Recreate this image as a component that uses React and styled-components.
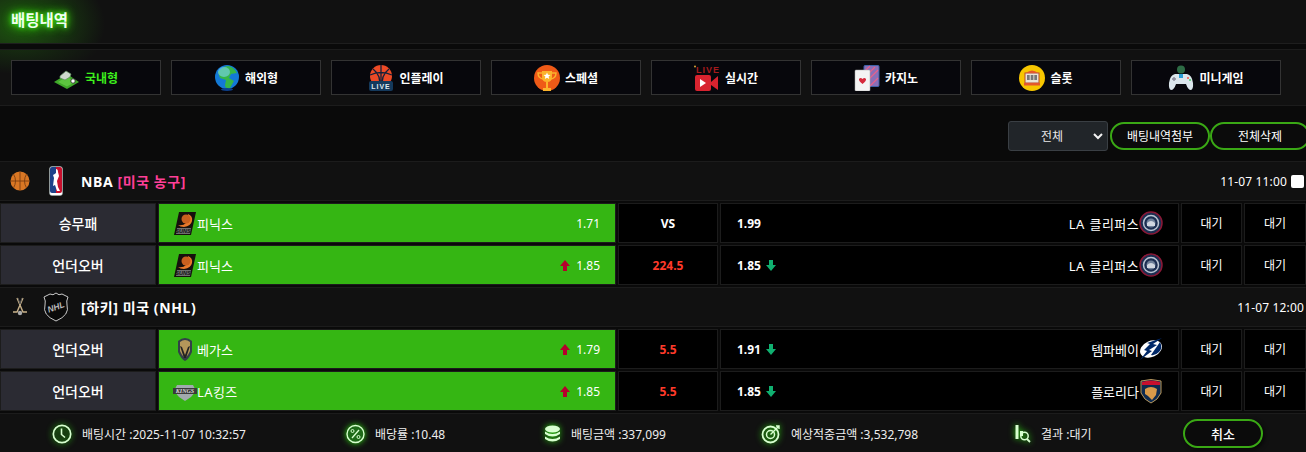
import styled, { createGlobalStyle } from "styled-components";

const GlobalStyle = createGlobalStyle`
  html, body { margin: 0; padding: 0; background: #0a0a0a; }
  body { font-family: "Noto Sans", "Noto Sans CJK KR", sans-serif; color: #fff; overflow: hidden; }
  * { box-sizing: border-box; }
`;

const Page = styled.div`
  width: 1306px;
  height: 452px;
  overflow: hidden;
  background: #0a0a0a;
`;

const TitleBar = styled.div`
  height: 44px;
  display: flex;
  align-items: center;
  padding: 0 0 4px 11px;
  background: radial-gradient(ellipse 85px 60px at 20px 24px, rgba(44, 160, 14, 0.5), rgba(44, 160, 14, 0) 100%), #111;
  border-bottom: 1px solid #1e1e1e;
`;

const Title = styled.h1`
  margin: 0;
  font-size: 15.5px;
  font-weight: 700;
  color: #f0fff0;
  text-shadow: 0 0 4px #3fe010, 0 0 8px #3fe010, 0 0 12px #2cb80c;
`;

const NavBar = styled.div`
  margin-top: 5px;
  height: 57px;
  display: flex;
  gap: 10px;
  padding: 10px 0 0 11px;
  background: radial-gradient(ellipse 80px 30px at 20px -6px, rgba(44, 160, 14, 0.22), rgba(44, 160, 14, 0) 100%), #111;
  border-top: 1px solid #1c1c1c;
  border-bottom: 1px solid #1c1c1c;
`;

const NavButton = styled.div`
  width: 150px;
  height: 35px;
  display: flex;
  align-items: center;
  justify-content: center;
  gap: 5px;
  background: #07070c;
  border: 1px solid #333;
  font-size: 12px;
  font-weight: 700;
  color: ${(p) => (p.$active ? "#3df01c" : "#fff")};
`;

const Toolbar = styled.div`
  height: 55px;
  display: flex;
  align-items: center;
  justify-content: flex-end;
  padding: 5px 0 0 0;
  margin-right: -4px;
`;

const SelectBox = styled.div`
  width: 100px;
  height: 30px;
  margin-right: 2px;
  display: flex;
  align-items: center;
  padding: 0 4px 0 32px;
  justify-content: space-between;
  background: #212529;
  border: 1px solid #3a3f44;
  border-radius: 3px;
  font-size: 12px;
  color: #e8e8e8;
`;

const PillButton = styled.div`
  width: ${(p) => p.$w || 100}px;
  height: 28px;
  display: flex;
  align-items: center;
  justify-content: center;
  background: #0b0b0b;
  border: 2px solid #3aa815;
  border-radius: 14px;
  font-size: 12px;
  color: #fff;
`;

const GroupHeader = styled.div`
  height: 40px;
  margin-bottom: 2px;
  display: flex;
  align-items: center;
  background: #111;
  border-top: 1px solid #1c1c1c;
  border-bottom: 1px solid #1c1c1c;
  padding-right: 2px;
`;

const SportSlot = styled.div`
  width: 40px;
  display: flex;
  justify-content: center;
`;

const LeagueSlot = styled.div`
  width: 32px;
  display: flex;
  justify-content: center;
`;

const LeagueName = styled.div`
  margin-left: 9px;
  font-size: 14px;
  font-weight: 700;
  letter-spacing: 0.6px;
  flex: 1;
  color: #fff;
`;

const Accent = styled.span`
  color: #ff3f97;
`;

const KickOff = styled.div`
  font-size: 12px;
  letter-spacing: 0.15px;
  color: #fff;
`;

const CheckBox = styled.div`
  width: 13px;
  height: 13px;
  margin-left: 4px;
  background: #fff;
  border-radius: 2px;
`;

const Row = styled.div`
  height: 40px;
  margin-bottom: 2px;
  display: grid;
  grid-template-columns: 156px 458px 100px 459px 61px 62px;
  column-gap: 2px;
`;

const Cell = styled.div`
  display: flex;
  align-items: center;
  background: #000;
  border: 1px solid #1c1c1c;
  font-size: 12px;
  color: #fff;
`;

const LabelCell = styled(Cell)`
  justify-content: center;
  background: #2b2b33;
  font-size: 14px;
  font-weight: 500;
`;

const HomeCell = styled(Cell)`
  background: #35b613;
  padding: 0 15px 0 14px;
  font-size: 13px;
`;

const AwayCell = styled(Cell)`
  padding: 0 15px 0 16px;
  font-size: 13px;
`;

const CenterCell = styled(Cell)`
  justify-content: center;
  font-weight: 700;
  color: ${(p) => (p.$red ? "#ff3a2a" : "#fff")};
`;

const StatusCell = styled(Cell)`
  justify-content: center;
`;

const TeamName = styled.span`
  flex: 1;
  letter-spacing: ${(p) => (p.$wide ? "0.4px" : "0")};
  word-spacing: ${(p) => (p.$wide ? "1px" : "0")};
`;

const AwayName = styled(TeamName)`
  flex: 0 0 auto;
  margin-left: auto;
`;

const Odds = styled.span`
  font-size: 12px;
  font-weight: ${(p) => (p.$bold ? 700 : 400)};
`;

const ArrowWrap = styled.span`
  display: inline-flex;
  margin: ${(p) => (p.$left ? "0 6px 0 0" : "0 0 0 5px")};
`;

const Footer = styled.div`
  height: 40px;
  display: grid;
  grid-template-columns: 294px 198px 217px 254px 168px 80px;
  align-items: center;
  padding-left: 52px;
  background: #111;
  border-top: 1px solid #1c1c1c;
`;

const FooterItem = styled.div`
  display: flex;
  align-items: center;
  gap: 10px;
  font-size: 12px;
  color: #eee;
`;

const CancelButton = styled(PillButton)`
  height: 29px;
  border-radius: 15px;
  font-size: 13px;
  font-weight: 500;
  box-shadow: 2px 2px 4px rgba(0, 0, 0, 0.6);
`;

const Glow = styled.svg`
  filter: drop-shadow(0 0 3px #2ee00f);
  flex: none;
`;

const FieldIcon = () => (
  <svg width="26" height="26" viewBox="0 0 26 26">
    <path d="M0 17 13 9l12 8-12 7z" fill="#3fa82a" />
    <path d="M4 17 13 11.500l8 5.500-8 4.500z" fill="#5cc63f" />
    <path d="M6 11l6-5 5 3-1 3-5 3-5-2z" fill="#cfd8cf" stroke="#5a8a5a" strokeWidth="0.7" />
    <circle cx="19" cy="16" r="2.200" fill="#fff" stroke="#222" strokeWidth="0.800" />
  </svg>
);

const GlobeIcon = () => (
  <svg width="26" height="26" viewBox="0 0 26 26">
    <circle cx="13" cy="12" r="12" fill="#1379d6" />
    <path d="M4 7q5-6 10-6 6 1 9 7l-6 1-2 4 5 3-4 7q-5 1-5-3l1-5-6-2z" fill="#35b648" />
    <ellipse cx="10" cy="7" rx="6" ry="5" fill="#7fd4f4" opacity="0.6" />
    <ellipse cx="13" cy="24.500" rx="6" ry="1.400" fill="#0c3f8c" />
  </svg>
);

const LiveBallIcon = () => (
  <svg width="26" height="26" viewBox="0 0 26 26">
    <circle cx="13" cy="11" r="11" fill="#ed4a26" />
    <path d="M2 10q11-5 22 0M13 0v22M5 4q9 7 6 18M21 4q-9 7-6 18" fill="none" stroke="#12203a" strokeWidth="1.300" />
    <rect x="1" y="16" width="24" height="10" rx="2" fill="#14395c" />
    <text x="13" y="24" textAnchor="middle" fontSize="7" fontWeight="700" letterSpacing="1" fill="#dfe8f0" fontFamily="Liberation Sans, sans-serif">LIVE</text>
  </svg>
);

const TrophyIcon = () => (
  <svg width="26" height="26" viewBox="0 0 26 26">
    <circle cx="13" cy="13" r="13" fill="#ef5a17" />
    <path d="M8 6h10v6q0 5-5 5t-5-5z" fill="#fbb32c" />
    <path d="M8 8H4q0 5 5 6M18 8h4q0 5-5 6" fill="none" stroke="#fbb32c" strokeWidth="1.400" />
    <path d="M12 17h2v6h3v3H9v-3h3z" fill="#fbb32c" />
    <path d="m13 7.500 1 2.300 2.500.2-1.900 1.600.6 2.400-2.200-1.300-2.200 1.300.6-2.400-1.900-1.600 2.500-.2z" fill="#fff" />
  </svg>
);

const LiveCamIcon = () => (
  <svg width="26" height="26" viewBox="0 0 26 26">
    <text x="2" y="8" fontSize="9" fontWeight="700" letterSpacing="1" fill="#a51a1c" fontFamily="Liberation Sans, sans-serif">LIVE</text>
    <circle cx="1" cy="1.500" r="1" fill="#d9a23a" />
    <rect x="1" y="10" width="16" height="16" rx="2" fill="#d8232f" />
    <path d="m17 17 7-6v14l-7-5z" fill="#d8232f" />
    <path d="m6 14 6 4-6 4z" fill="#fff" />
  </svg>
);

const CardsIcon = () => (
  <svg width="26" height="26" viewBox="0 0 26 26">
    <rect x="10" y="0.500" width="15" height="21" rx="1" fill="#8a6fb8" stroke="#3d62a8" />
    <path d="m11 6 5-5M11 12 21 2M11 18 24 5M16 21l8-8" stroke="#e8608a" strokeWidth="1.200" />
    <rect x="1" y="5" width="15" height="21" rx="1" fill="#f4f4f4" stroke="#aaa" strokeWidth="0.500" />
    <path d="M8.500 19q-4-3-3.500-5 1.500-2 3.500 0 2-2 3.500 0 .5 2-3.500 5z" fill="#d62a3c" />
  </svg>
);

const SlotIcon = () => (
  <svg width="26" height="26" viewBox="0 0 26 26">
    <circle cx="13" cy="13" r="13" fill="#f7c600" />
    <rect x="6" y="8" width="14" height="10" fill="#e9e4d8" stroke="#b9482c" />
    <path d="M7 8q6-5 12 0z" fill="#e4582c" />
    <rect x="8" y="10" width="2.700" height="5" fill="#777" />
    <rect x="11.700" y="10" width="2.700" height="5" fill="#777" />
    <rect x="15.300" y="10" width="2.700" height="5" fill="#777" />
    <rect x="5" y="18" width="16" height="2.500" fill="#e4582c" />
  </svg>
);

const PadIcon = () => (
  <svg width="26" height="26" viewBox="0 0 26 26">
    <circle cx="13" cy="4.500" r="4" fill="#2d6b45" />
    <path d="M7 9h12q5 1 6 9 .5 6-2 7-3 0-5-6H8q-2 6-5 6-2.500-1-2-7 1-8 6-9z" fill="#dbe6ec" />
    <rect x="11" y="9" width="4" height="4" fill="#2a9fd6" />
    <circle cx="20" cy="13" r="1" fill="#e54" />
    <circle cx="22" cy="15" r="1" fill="#4c6" />
    <path d="M6 12v4M4 14h4" stroke="#889" strokeWidth="1.400" />
  </svg>
);

const BasketballIcon = () => (
  <svg width="20" height="20" viewBox="0 0 20 20">
    <circle cx="10" cy="10" r="9.500" fill="#d97724" />
    <path d="M.5 10h19M10 .5v19M3.500 3q4 7 0 14M16.500 3q-4 7 0 14" fill="none" stroke="#7a3d10" strokeWidth="0.900" />
  </svg>
);

const NbaLogo = () => (
  <svg width="14" height="30" viewBox="0 0 14 30">
    <rect x="0.500" y="0.500" width="13" height="29" rx="2.500" fill="#fff" stroke="#9aa" strokeWidth="0.500" />
    <path d="M1 3q0-2 2-2h4v26H3q-2 0-2-2z" fill="#1d428a" />
    <path d="M7 1h4q2 0 2 2v22q0 2-2 2H7z" fill="#c8102e" />
    <path d="M7 3q2 0 2 3l1 4-2 5 1 6 2 4H8l-2-6-2 1 1-8-1-3q2-1 3-2z" fill="#fff" />
  </svg>
);

const SticksIcon = () => (
  <svg width="16" height="20" viewBox="0 0 16 20">
    <path d="M11 1 5 15H1M5 1l6 14h4" fill="none" stroke="#c9b28a" strokeWidth="1.400" />
    <path d="M8 7 6 1M8 7l2-6" stroke="#555" strokeWidth="1" />
    <circle cx="8" cy="16" r="2.200" fill="#aaa" />
  </svg>
);

const NhlLogo = () => (
  <svg width="26" height="30" viewBox="0 0 26 30">
    <path d="M13 1q3 3 6 1l6 3q-2 4-1 8 3 10-11 16Q-1 23 2 13q1-4-1-8l6-3q3 2 6-1z" fill="#0a0a0a" stroke="#c9c9c9" strokeWidth="1" />
    <text x="13" y="18" textAnchor="middle" fontSize="8.500" fontWeight="700" fontStyle="italic" fill="#bbb" fontFamily="Liberation Sans, sans-serif" transform="rotate(-20 13 15)">NHL</text>
  </svg>
);

const SunsLogo = () => (
  <svg width="24" height="25" viewBox="0 0 24 25">
    <path d="M6 1h17l-5 23H1z" fill="#16100d" />
    <path d="M15 3q5 2 4 7t-8 6q-4 0-6-2 5 1 8-2t2-9z" fill="#e8792b" />
    <circle cx="13" cy="8" r="4.500" fill="#c9601f" />
    <path d="M4 17h14l-1 6H3z" fill="#6e6e6e" />
    <text x="10" y="22" textAnchor="middle" fontSize="5.500" fontWeight="700" fontStyle="italic" fill="#111" fontFamily="Liberation Sans, sans-serif">SUNS</text>
  </svg>
);

const ClippersLogo = () => (
  <svg width="24" height="24" viewBox="0 0 24 24">
    <circle cx="12" cy="12" r="11" fill="#1c2f52" stroke="#8a1836" strokeWidth="1.500" />
    <circle cx="12" cy="12" r="7.500" fill="none" stroke="#b9c4d2" strokeWidth="1.500" />
    <circle cx="12" cy="12" r="4.500" fill="#6d7f98" />
    <path d="M8 12q4-4 8 0v3H8z" fill="#cfd6e0" />
  </svg>
);

const VegasLogo = () => (
  <svg width="24" height="25" viewBox="0 0 24 25">
    <path d="M5 4q7-6 14 0v11q-3 7-7 9-4-2-7-9z" fill="#333f48" />
    <path d="M7 5q5-4 10 0v9q-2 5-5 7-3-2-5-7z" fill="#b4975a" />
    <path d="m9 10 3 8 3-8 2-1-4 12h-2L7 9z" fill="#222" />
  </svg>
);

const KingsLogo = () => (
  <svg width="24" height="25" viewBox="0 0 24 25">
    <path d="M4 6h16l3 6-5 6-6 4-6-4-5-6z" fill="#a2aaad" />
    <rect x="0" y="9" width="24" height="6" fill="#3a3a3a" />
    <text x="12" y="14" textAnchor="middle" fontSize="6" fontWeight="700" fontStyle="italic" fill="#ddd" fontFamily="Liberation Serif, serif">KINGS</text>
  </svg>
);

const LightningLogo = () => (
  <svg width="24" height="24" viewBox="0 0 24 24">
    <ellipse cx="12" cy="12" rx="11.500" ry="8" fill="#fff" transform="rotate(-25 12 12)" />
    <path d="M23 1 14 7l4 1-8 5 3 1L1 23l7-9-3-1 6-6-3-1z" fill="#002868" />
    <path d="M21 5q3 6-1 10t-8 3z" fill="#002868" />
  </svg>
);

const PanthersLogo = () => (
  <svg width="24" height="25" viewBox="0 0 24 25">
    <path d="M2 2q10-3 20 0v12q-3 7-10 10Q5 21 2 14z" fill="#0d2a4f" stroke="#b9975b" strokeWidth="1" />
    <path d="M3 3q9-3 18 0v3H3z" fill="#c8102e" />
    <path d="M6 10q6-4 12 0l-1 6-4 5-4-4-3-2z" fill="#d89a4a" />
  </svg>
);

const UpArrow = () => (
  <svg width="10" height="11" viewBox="0 0 10 11">
    <path d="M5 0 10 6H7v5H3V6H0z" fill="#b5002c" />
  </svg>
);

const DownArrow = () => (
  <svg width="10" height="11" viewBox="0 0 10 11">
    <path d="M5 11 10 5H7V0H3v5H0z" fill="#10b070" />
  </svg>
);

const Chevron = () => (
  <svg width="10" height="7" viewBox="0 0 10 7">
    <path d="M1 1l4 4 4-4" fill="none" stroke="#f2f2f2" strokeWidth="2" />
  </svg>
);

const GLOW = "#d8ffd0";

const ClockIcon = () => (
  <Glow width="20" height="20" viewBox="0 0 20 20">
    <circle cx="10" cy="10" r="8.700" fill="none" stroke={GLOW} strokeWidth="1.700" />
    <path d="M9.500 4.500V10.500l3.500 3" fill="none" stroke={GLOW} strokeWidth="1.600" />
  </Glow>
);

const PercentIcon = () => (
  <Glow width="19" height="20" viewBox="0 0 19 20">
    <circle cx="9.500" cy="10" r="8.500" fill="#1e6a18" stroke={GLOW} strokeWidth="1.400" />
    <path d="m6 14 7-8" stroke={GLOW} strokeWidth="1.300" />
    <circle cx="6.500" cy="7" r="1.500" fill="none" stroke={GLOW} />
    <circle cx="12.500" cy="13" r="1.500" fill="none" stroke={GLOW} />
  </Glow>
);

const CoinsIcon = () => (
  <Glow width="17" height="18" viewBox="0 0 17 18">
    <ellipse cx="8.500" cy="4" rx="7.500" ry="3.500" fill={GLOW} />
    <path d="M1 6.500q7.500 5 15 0V9q-7.500 5-15 0zM1 11.500q7.500 5 15 0V14q-7.500 5-15 0z" fill={GLOW} />
  </Glow>
);

const TargetIcon = () => (
  <Glow width="20" height="20" viewBox="0 0 20 20">
    <circle cx="9.500" cy="10.500" r="8" fill="none" stroke={GLOW} strokeWidth="1.800" />
    <circle cx="9.500" cy="10.500" r="4" fill="none" stroke={GLOW} strokeWidth="1.500" />
    <path d="m9.500 10.500 8-8M15 2h3v3" fill="none" stroke={GLOW} strokeWidth="1.400" />
  </Glow>
);

const ResultIcon = () => (
  <Glow width="16" height="20" viewBox="0 0 16 20">
    <rect x="0.500" y="1" width="3" height="14" fill={GLOW} />
    <rect x="5" y="7" width="3" height="5" fill={GLOW} />
    <circle cx="9.500" cy="12" r="3.700" fill="none" stroke={GLOW} strokeWidth="1.500" />
    <path d="m12 15 3 3" stroke={GLOW} strokeWidth="1.800" />
  </Glow>
);

const navItems = [
  { label: "국내형", Icon: FieldIcon, active: true },
  { label: "해외형", Icon: GlobeIcon },
  { label: "인플레이", Icon: LiveBallIcon },
  { label: "스페셜", Icon: TrophyIcon },
  { label: "실시간", Icon: LiveCamIcon },
  { label: "카지노", Icon: CardsIcon },
  { label: "슬롯", Icon: SlotIcon },
  { label: "미니게임", Icon: PadIcon },
];

const BetRow = ({ market, HomeLogo, home, homeOdds, up, middle, red, awayOdds, down, away, AwayLogo, wideHome, wideAway }) => (
  <Row>
    <LabelCell>{market}</LabelCell>
    <HomeCell>
      <HomeLogo />
      <TeamName $wide={wideHome}>{home}</TeamName>
      {up && (
        <ArrowWrap $left>
          <UpArrow />
        </ArrowWrap>
      )}
      <Odds>{homeOdds}</Odds>
    </HomeCell>
    <CenterCell $red={red}>{middle}</CenterCell>
    <AwayCell>
      <Odds $bold>{awayOdds}</Odds>
      {down && (
        <ArrowWrap>
          <DownArrow />
        </ArrowWrap>
      )}
      <AwayName $wide={wideAway}>{away}</AwayName>
      <AwayLogo />
    </AwayCell>
    <StatusCell>대기</StatusCell>
    <StatusCell>대기</StatusCell>
  </Row>
);

export default function App() {
  return (
    <Page>
      <GlobalStyle />
      <TitleBar>
        <Title>배팅내역</Title>
      </TitleBar>
      <NavBar>
        {navItems.map(({ label, Icon, active }) => (
          <NavButton key={label} $active={active}>
            <Icon />
            {label}
          </NavButton>
        ))}
      </NavBar>
      <Toolbar>
        <SelectBox>
          전체
          <Chevron />
        </SelectBox>
        <PillButton>배팅내역첨부</PillButton>
        <PillButton>전체삭제</PillButton>
      </Toolbar>

      <GroupHeader>
        <SportSlot>
          <BasketballIcon />
        </SportSlot>
        <LeagueSlot>
          <NbaLogo />
        </LeagueSlot>
        <LeagueName>
          NBA <Accent>[미국 농구]</Accent>
        </LeagueName>
        <KickOff>11-07 11:00</KickOff>
        <CheckBox />
      </GroupHeader>
      <BetRow market="승무패" HomeLogo={SunsLogo} home="피닉스" homeOdds="1.71" middle="VS" awayOdds="1.99" away="LA 클리퍼스" wideAway AwayLogo={ClippersLogo} />
      <BetRow market="언더오버" HomeLogo={SunsLogo} home="피닉스" homeOdds="1.85" up middle="224.5" red awayOdds="1.85" down away="LA 클리퍼스" wideAway AwayLogo={ClippersLogo} />

      <GroupHeader>
        <SportSlot>
          <SticksIcon />
        </SportSlot>
        <LeagueSlot>
          <NhlLogo />
        </LeagueSlot>
        <LeagueName>[하키] 미국 (NHL)</LeagueName>
        <KickOff>11-07 12:00</KickOff>
      </GroupHeader>
      <BetRow market="언더오버" HomeLogo={VegasLogo} home="베가스" homeOdds="1.79" up middle="5.5" red awayOdds="1.91" down away="템파베이" AwayLogo={LightningLogo} />
      <BetRow market="언더오버" HomeLogo={KingsLogo} home="LA킹즈" wideHome homeOdds="1.85" up middle="5.5" red awayOdds="1.85" down away="플로리다" AwayLogo={PanthersLogo} />

      <Footer>
        <FooterItem>
          <ClockIcon />
          배팅시간 :2025-11-07 10:32:57
        </FooterItem>
        <FooterItem>
          <PercentIcon />
          배당률 :10.48
        </FooterItem>
        <FooterItem>
          <CoinsIcon />
          배팅금액 :337,099
        </FooterItem>
        <FooterItem>
          <TargetIcon />
          예상적중금액 :3,532,798
        </FooterItem>
        <FooterItem>
          <ResultIcon />
          결과 :대기
        </FooterItem>
        <CancelButton $w={80}>취소</CancelButton>
      </Footer>
    </Page>
  );
}
